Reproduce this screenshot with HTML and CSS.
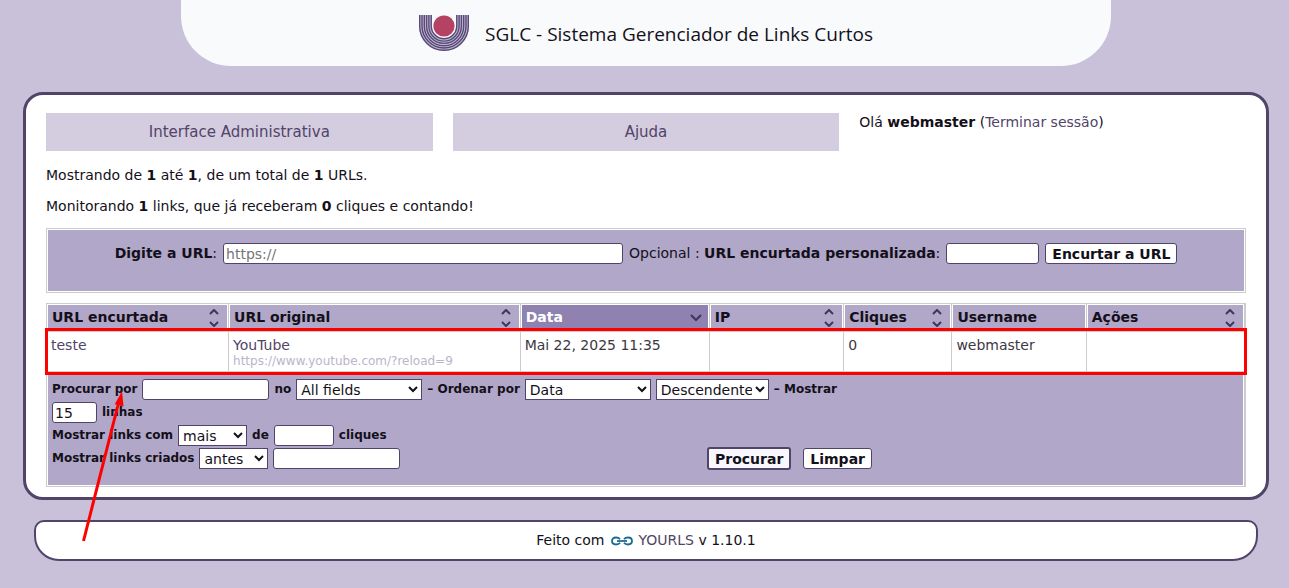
FILE: index.html
```html
<!DOCTYPE html>
<html lang="pt-BR">
<head>
  <meta charset="utf-8">
  <title>SGLC - Sistema Gerenciador de Links Curtos</title>
  <link rel="stylesheet" href="styles.css">
</head>
<body>
  <svg class="icon-defs" aria-hidden="true">
    <symbol id="sort-both" viewBox="0 0 10 18">
      <path d="M1 5l4-4 4 4M1 13l4 4 4-4"/>
    </symbol>
    <symbol id="sort-down" viewBox="0 0 12 18">
      <path d="M1 6l5 5 5-5"/>
    </symbol>
  </svg>

  <header class="site-header">
    <svg class="logo" viewBox="0 0 50 36" role="img" aria-label="Logo">
      <path d="M6.500 0v11a18.500 18.500 0 0 0 37 0V0" fill="none" stroke="#c3bdd0" stroke-width="13"/>
      <g fill="none" stroke="#58487a" stroke-width="1.4">
        <path d="M.7 0v11a24.300 24.300 0 0 0 48.600 0V0"/>
        <path d="M3 0v11a22 22 0 0 0 44 0V0"/>
        <path d="M5.300 0v11a19.700 19.700 0 0 0 39.400 0V0"/>
        <path d="M7.600 0v11a17.400 17.400 0 0 0 34.800 0V0"/>
        <path d="M9.900 0v11a15.100 15.100 0 0 0 30.200 0V0"/>
        <path d="M12.200 0v11a12.800 12.800 0 0 0 25.600 0V0"/>
      </g>
      <circle cx="25" cy="11" r="10.6" fill="#b54163"/>
    </svg>
    <h1>SGLC - Sistema Gerenciador de Links Curtos</h1>
  </header>

  <main>
    <nav>
      <a href="#" class="nav-button">Interface Administrativa</a>
      <a href="#" class="nav-button">Ajuda</a>
      <div class="session">Olá <strong>webmaster</strong> (<a href="#">Terminar sessão</a>)</div>
    </nav>

    <p>Mostrando de <strong>1</strong> até <strong>1</strong>, de um total de <strong>1</strong> URLs.</p>
    <p>Monitorando <strong>1</strong> links, que já receberam <strong>0</strong> cliques e contando!</p>

    <form class="new-url">
      <label for="add-url"><strong>Digite a URL</strong>:</label>
      <input type="text" id="add-url" class="input-url" placeholder="https://">
      <label for="add-keyword">Opcional : <strong>URL encurtada personalizada</strong>:</label>
      <input type="text" id="add-keyword" class="input-keyword">
      <button type="button">Encurtar a URL</button>
    </form>

    <table>
      <colgroup>
        <col class="col-short">
        <col class="col-long">
        <col class="col-date">
        <col class="col-ip">
        <col class="col-clicks">
        <col class="col-user">
        <col class="col-actions">
      </colgroup>
      <thead>
        <tr>
          <th><div class="heading">URL encurtada <svg class="sort"><use href="#sort-both"/></svg></div></th>
          <th><div class="heading">URL original <svg class="sort"><use href="#sort-both"/></svg></div></th>
          <th class="sorted"><div class="heading">Data <svg class="sort sort-wide"><use href="#sort-down"/></svg></div></th>
          <th><div class="heading">IP <svg class="sort"><use href="#sort-both"/></svg></div></th>
          <th><div class="heading">Cliques <svg class="sort"><use href="#sort-both"/></svg></div></th>
          <th><div class="heading">Username</div></th>
          <th><div class="heading">Ações <svg class="sort"><use href="#sort-both"/></svg></div></th>
        </tr>
      </thead>
      <tbody>
        <tr class="highlight">
          <td><a href="#">teste</a></td>
          <td><a href="#">YouTube</a><a href="#" class="long-url">https://www.youtube.com/?reload=9</a></td>
          <td>Mai 22, 2025 11:35</td>
          <td></td>
          <td>0</td>
          <td>webmaster</td>
          <td></td>
        </tr>
      </tbody>
      <tfoot>
        <tr>
          <td colspan="7">
            <form class="filter">
              <div class="filter-line">
                <label for="search">Procurar por</label>
                <input type="text" id="search" class="input-text">
                <label for="search-in">no</label>
                <select id="search-in" class="select-wide"><option>All fields</option></select>
                <label for="sort-by">– Ordenar por</label>
                <select id="sort-by" class="select-wide"><option>Data</option></select>
                <select class="select-order" aria-label="Ordem"><option>Descendente</option></select>
                <label for="perpage">– Mostrar</label>
              </div>
              <div class="filter-line">
                <input type="text" id="perpage" class="input-rows" value="15">
                <label for="perpage">linhas</label>
              </div>
              <div class="filter-line">
                <label for="click-filter">Mostrar links com</label>
                <select id="click-filter" class="select-small"><option>mais</option></select>
                <label for="click-limit">de</label>
                <input type="text" id="click-limit" class="input-clicks">
                <label for="click-limit">cliques</label>
              </div>
              <div class="filter-line">
                <label for="date-filter">Mostrar links criados</label>
                <select id="date-filter" class="select-small"><option>antes</option></select>
                <input type="text" class="input-text" aria-label="Data">
                <div class="filter-buttons">
                  <button type="button" class="primary">Procurar</button>
                  <button type="button">Limpar</button>
                </div>
              </div>
            </form>
          </td>
        </tr>
      </tfoot>
    </table>
  </main>

  <footer>
    Feito com
    <svg class="chain" viewBox="0 0 22 10" aria-hidden="true">
      <g fill="none" stroke="#1c6a96" stroke-width="1.8">
        <path d="M9 3.200C8 1.800 6.500 1.500 5 1.500 2.500 1.500 1 3 1 5s1.500 3.500 4 3.500c1.500 0 3-.3 4-1.700"/>
        <path d="M13 3.200c1-1.400 2.500-1.700 4-1.700 2.500 0 4 1.500 4 3.500s-1.500 3.500-4 3.500c-1.500 0-3-.3-4-1.700"/>
        <path d="M6 5h10"/>
      </g>
    </svg>
    <span><a href="#">YOURLS</a> v 1.10.1</span>
  </footer>

  <svg class="arrow" viewBox="0 0 46 152" aria-hidden="true">
    <path d="M3.500 150L38 14" fill="none" stroke="#f00" stroke-width="3"/>
    <path d="M42 0l1.500 15.500-8.700-2.200z" fill="#f00"/>
  </svg>
</body>
</html>
```
FILE: styles.css
```css
* {
  box-sizing: border-box;
}

body {
  position: relative;
  margin: 0;
  padding: 0 20px 26px 23px;
  background: #c9c1d9;
  color: #141019;
  font-family: Verdana, "DejaVu Sans", sans-serif;
  font-size: 14px;
  line-height: 19px;
}

a {
  color: #514469;
  text-decoration: none;
}

.icon-defs {
  position: absolute;
  width: 0;
  height: 0;
}

.site-header {
  display: flex;
  justify-content: center;
  gap: 16px;
  max-width: 930px;
  height: 66px;
  margin: 0 auto 26px;
  padding-top: 15px;
  background: #f8fafc;
  border-radius: 0 0 50px 50px;
}

.logo {
  width: 50px;
  height: 36px;
}

h1 {
  margin: 4px 0 0;
  font-family: "Segoe UI", "Open Sans", sans-serif;
  font-size: 19px;
  font-weight: 400;
  line-height: 30px;
}

main {
  padding: 18px 20px 10px;
  background: #fff;
  border: 3px solid #514469;
  border-radius: 20px;
}

nav {
  display: grid;
  grid-template-columns: repeat(3, 1fr);
  gap: 20px;
  margin-bottom: 15px;
}

.nav-button {
  background: #d4ccdf;
  font-size: 15px;
  line-height: 38px;
  text-align: center;
}

p {
  margin: 0 0 12px;
}

.new-url {
  display: flex;
  justify-content: center;
  align-items: center;
  gap: 6px;
  margin-bottom: 10px;
  padding: 14px 0 28px;
  background: #b0a7c9;
  border: 1px solid #ccc;
  box-shadow: inset 0 0 0 1px #fff;
}

input,
select,
button {
  height: 21px;
  background: #fff;
  border: 1px solid #514469;
  color: #141019;
  font-family: inherit;
  font-size: 14px;
}

input {
  padding: 1px 2px;
  border-radius: 3px;
}

select {
  padding: 0;
  border-radius: 0;
}

button {
  padding: 0 6px;
  border-radius: 3px;
  font-weight: 700;
}

.input-url {
  width: 400px;
}

.input-keyword {
  width: 93px;
}

table {
  width: 100%;
  table-layout: fixed;
  background: #ccc;
  border-spacing: 1px;
}

.col-short {
  width: 15.2%;
}

.col-long {
  width: 24.4%;
}

.col-date {
  width: 15.8%;
}

.col-ip {
  width: 11.2%;
}

.col-clicks {
  width: 9%;
}

.col-user {
  width: 11.2%;
}

.col-actions {
  width: 13.2%;
}

th {
  padding: 0 4px;
  background: #b0a7c9;
  border: 1px solid #fff;
  text-align: left;
}

.sorted {
  background: #8f81b0;
  color: #fff;
}

.heading {
  display: flex;
  justify-content: space-between;
  align-items: center;
  height: 25px;
}

.sort {
  width: 10px;
  height: 18px;
  margin-right: 4px;
  fill: none;
  stroke: #40355a;
  stroke-width: 2;
}

.sort-wide {
  width: 12px;
  margin-right: 2px;
}

td {
  padding: 5px 4px 3px;
  background: #fff;
  color: #3c3843;
  line-height: 17px;
  vertical-align: top;
}

.long-url {
  display: block;
  color: #bbb4cb;
  font-size: 12px;
  line-height: 14px;
}

.highlight {
  position: relative;
}

.highlight::after {
  content: "";
  position: absolute;
  inset: -4px -2px;
  border: 3px solid #f00;
}

tfoot td {
  padding: 5px 4px 15px;
  background: #b0a7c9;
  border: 1px solid #fff;
  color: #141019;
}

.filter {
  max-width: 820px;
  font-size: 12px;
  font-weight: 700;
}

.filter-line {
  display: flex;
  align-items: center;
  gap: 5px;
  height: 23px;
}

.input-text {
  width: 127px;
}

.input-rows {
  width: 45px;
}

.input-clicks {
  width: 60px;
}

.select-wide {
  width: 126px;
}

.select-order {
  width: 113px;
}

.select-small {
  width: 69px;
}

.filter-buttons {
  display: flex;
  align-items: center;
  gap: 12px;
  margin-left: auto;
}

.primary {
  height: 23px;
  background: #f8f7fd;
  border-width: 2px;
}

footer {
  display: flex;
  justify-content: center;
  align-items: center;
  gap: 6px;
  height: 41px;
  margin: 20px 11px 0;
  background: #fff;
  border: 2px solid #514469;
  border-radius: 10px 10px 25px 25px;
}

.chain {
  width: 22px;
  height: 10px;
}

/* pointer drawn over the filter box */
.arrow {
  position: absolute;
  top: 391px;
  left: 80px;
  width: 46px;
  height: 152px;
}
```
